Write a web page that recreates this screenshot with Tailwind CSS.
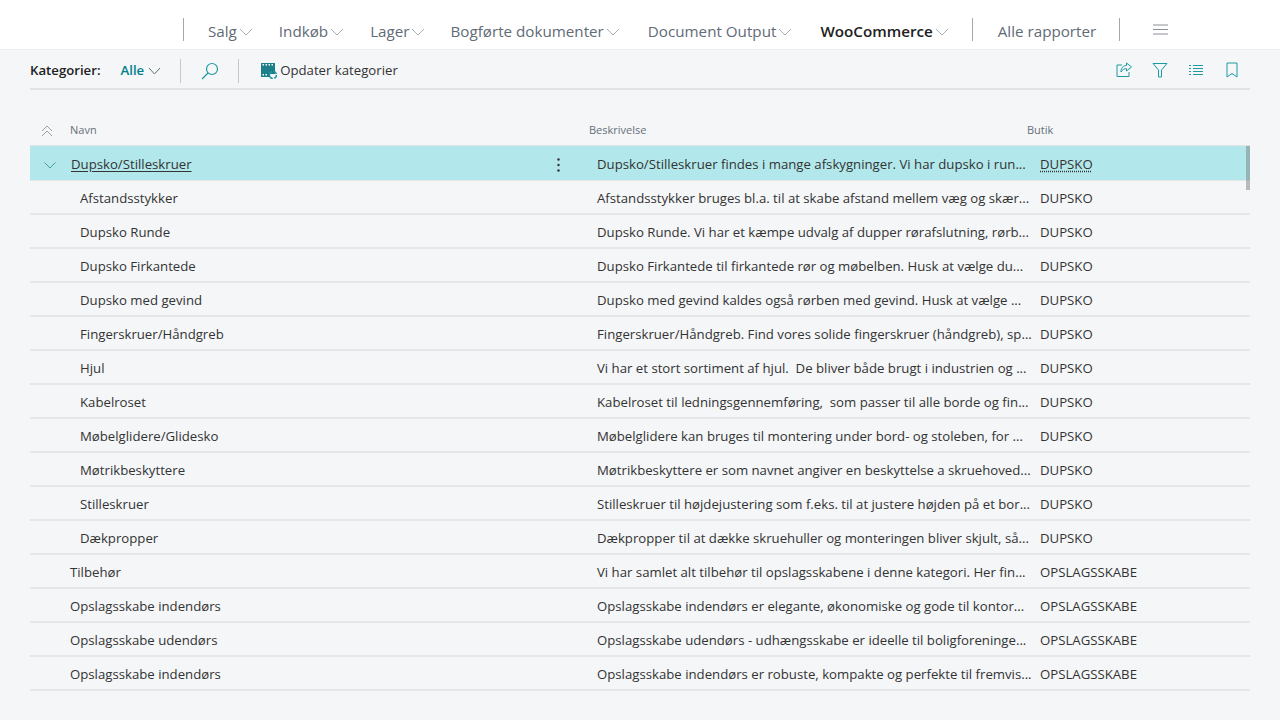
<!DOCTYPE html>
<html lang="da">
<head>
  <meta charset="UTF-8">
  <title>Kategorier</title>
  <script src="https://cdn.jsdelivr.net/npm/@tailwindcss/browser@4"></script>
</head>
<body class="bg-[#f5f6f8] h-[720px] overflow-hidden font-['Open_Sans',sans-serif] text-[13.2px] text-[#333]">
  <!-- top nav -->
  <nav class="h-[50px] bg-white flex items-center pl-[183px] pt-[10px] text-[15.2px] text-[#5f6b76] border-b border-[#eceef0]">
    <div class="w-px h-[23px] bg-[#a8a8a8]"></div>
    <div class="flex items-center pt-[3px] ml-[24px]">Salg<svg class="ml-[2px] mt-[2px] w-[14px] h-[8px]" viewBox="0 0 14 8" fill="none" stroke="#a9b0b5"><path d="M1 1l6 6 6-6"/></svg></div>
    <div class="flex items-center pt-[3px] ml-[26px]">Indkøb<svg class="ml-[2px] mt-[2px] w-[14px] h-[8px]" viewBox="0 0 14 8" fill="none" stroke="#a9b0b5"><path d="M1 1l6 6 6-6"/></svg></div>
    <div class="flex items-center pt-[3px] ml-[26px]">Lager<svg class="ml-[2px] mt-[2px] w-[14px] h-[8px]" viewBox="0 0 14 8" fill="none" stroke="#a9b0b5"><path d="M1 1l6 6 6-6"/></svg></div>
    <div class="flex items-center pt-[3px] ml-[25px]">Bogførte dokumenter<svg class="ml-[2px] mt-[2px] w-[14px] h-[8px]" viewBox="0 0 14 8" fill="none" stroke="#a9b0b5"><path d="M1 1l6 6 6-6"/></svg></div>
    <div class="flex items-center pt-[3px] ml-[28px]">Document Output<svg class="ml-[2px] mt-[2px] w-[14px] h-[8px]" viewBox="0 0 14 8" fill="none" stroke="#a9b0b5"><path d="M1 1l6 6 6-6"/></svg></div>
    <div class="flex items-center pt-[3px] ml-[28px] font-semibold text-[#212121]">WooCommerce<svg class="ml-[2px] mt-[2px] w-[14px] h-[8px]" viewBox="0 0 14 8" fill="none" stroke="#a9b0b5"><path d="M1 1l6 6 6-6"/></svg></div>
    <div class="w-px h-[23px] bg-[#a8a8a8] ml-[23px]"></div>
    <div class="pt-[3px] ml-[25px]">Alle rapporter</div>
    <div class="w-px h-[23px] bg-[#a8a8a8] ml-[23px]"></div>
    <svg class="ml-[32px] w-[17px] h-[11px]" viewBox="0 0 17 11" stroke="#8a9299" stroke-width="1.2"><path d="M1 1h15M1 5.5h15M1 10h15"/></svg>
  </nav>

  <!-- action bar -->
  <div class="mx-[30px] h-[40px] pt-[3px] flex items-center border-b-2 border-[#e1e3e5]">
    <span class="font-semibold text-[#212121]">Kategorier:</span>
    <span class="ml-[20px] font-semibold text-[#00808a]">Alle</span>
    <svg class="ml-[4px] w-[13px] h-[8px]" viewBox="0 0 13 8" fill="none" stroke="#5e7078"><path d="M1 1l5.500 6 5.500-6"/></svg>
    <div class="w-px h-[24px] bg-[#c8c8c8] ml-[19px]"></div>
    <svg class="ml-[20px] w-[18px] h-[18px]" viewBox="0 0 18 18" fill="none" stroke="#1f9aa3" stroke-width="1.200"><circle cx="11" cy="7" r="5.500"/><path d="M7 11l-6 6"/></svg>
    <div class="w-px h-[24px] bg-[#c8c8c8] ml-[19px]"></div>
    <svg class="ml-[22px] w-[16px] h-[16px]" viewBox="0 0 16 16"><path fill="#1a7f86" d="M0 0h14v11H9v3H0z"/><path fill="#fff" d="M1.500 1h1.500v1.500H1.500zM4.500 1H6v1.500H4.500zM7.500 1H9v1.500H7.500zM10.500 1H12v1.500h-1.500zM1.500 11H3v1.500H1.500zM4.500 11H6v1.500H4.500z"/><circle cx="12" cy="12" r="3.500" fill="none" stroke="#1f9aa3" stroke-width="1.500" stroke-dasharray="4 1.500"/></svg>
    <span class="ml-[3px]">Opdater kategorier</span>
    <div class="ml-auto flex items-center gap-[20px] pr-[10px] -mt-[2px]">
      <svg class="w-[16px] h-[16px]" viewBox="0 0 16 16" fill="none" stroke="#1f9aa3"><path d="M6 3H1v11.500h12V10"/><path d="M15.500 5L10.500 1v2.500C7 3.500 5 6 5 10c1.500-2.500 3-3.300 5.500-3.300V9z"/></svg>
      <svg class="w-[16px] h-[16px]" viewBox="0 0 16 16" fill="none" stroke="#1f9aa3"><path d="M1 1.500h14L9.500 8v7h-3V8z"/></svg>
      <svg class="w-[16px] h-[16px]" viewBox="0 0 16 16" fill="none" stroke="#1f9aa3"><path d="M1 3.500h2M5 3.500h10M1 6.500h2M5 6.500h10M1 9.500h2M5 9.500h10M1 12.500h2M5 12.500h10"/></svg>
      <svg class="w-[16px] h-[16px]" viewBox="0 0 16 16" fill="none" stroke="#1f9aa3"><path d="M3 1h10v14l-5-3.500L3 15z"/></svg>
    </div>
  </div>

  <!-- list -->
  <div class="mx-[30px] mt-[24px]">
    <div class="h-[32px] pt-[2px] flex items-center text-[11px] text-[#65707a] border-b border-[#e1e3e5]">
      <div class="w-[40px] pl-[11px]"><svg class="w-[12px] h-[12px]" viewBox="0 0 12 12" fill="none" stroke="#9aa0a5"><path d="M1 6l5-5 5 5M1 11l5-5 5 5"/></svg></div>
      <div class="w-[519px]">Navn</div>
      <div class="w-[438px]">Beskrivelse</div>
      <div>Butik</div>
    </div>
    <div class="relative">
      <div class="h-[35px] pt-[4px] flex items-center bg-[#b2e8eb] bg-clip-padding border-b border-[#e4e6e8] relative">
        <div class="w-[41px] pl-[14px]"><svg class="w-[12px] h-[7px]" viewBox="0 0 12 7" fill="none" stroke="#4d9aa2"><path d="M.5.500L6 6l5.500-5.500"/></svg></div>
        <div class="w-[526px] flex justify-between items-center pr-[37px]"><span class="underline underline-offset-2">Dupsko/Stilleskruer</span><svg class="w-[3px] h-[14px]" viewBox="0 0 3 14" fill="#333"><circle cx="1.500" cy="1.500" r="1.200"/><circle cx="1.500" cy="7" r="1.200"/><circle cx="1.500" cy="12.500" r="1.200"/></svg></div>
        <div class="w-[443px] whitespace-pre">Dupsko/Stilleskruer findes i mange afskygninger. Vi har dupsko i run...</div>
        <div class="underline decoration-dotted underline-offset-2">DUPSKO</div>
        <div class="absolute right-0 top-0 w-[4px] h-[44px] bg-[#7a8080]/50"></div>
      </div>
      <div class="h-[34px] pt-[4px] flex items-center border-b-2 border-[#e4e6e8]"><div class="w-[50px] shrink-0"></div><div class="w-[517px]">Afstandsstykker</div><div class="w-[443px] whitespace-pre">Afstandsstykker bruges bl.a. til at skabe afstand mellem væg og skær...</div><div>DUPSKO</div></div>
      <div class="h-[34px] pt-[4px] flex items-center border-b-2 border-[#e4e6e8]"><div class="w-[50px] shrink-0"></div><div class="w-[517px]">Dupsko Runde</div><div class="w-[443px] whitespace-pre">Dupsko Runde. Vi har et kæmpe udvalg af dupper rørafslutning, rørb...</div><div>DUPSKO</div></div>
      <div class="h-[34px] pt-[4px] flex items-center border-b-2 border-[#e4e6e8]"><div class="w-[50px] shrink-0"></div><div class="w-[517px]">Dupsko Firkantede</div><div class="w-[443px] whitespace-pre">Dupsko Firkantede til firkantede rør og møbelben. Husk at vælge du...</div><div>DUPSKO</div></div>
      <div class="h-[34px] pt-[4px] flex items-center border-b-2 border-[#e4e6e8]"><div class="w-[50px] shrink-0"></div><div class="w-[517px]">Dupsko med gevind</div><div class="w-[443px] whitespace-pre">Dupsko med gevind kaldes også rørben med gevind. Husk at vælge ...</div><div>DUPSKO</div></div>
      <div class="h-[34px] pt-[4px] flex items-center border-b-2 border-[#e4e6e8]"><div class="w-[50px] shrink-0"></div><div class="w-[517px]">Fingerskruer/Håndgreb</div><div class="w-[443px] whitespace-pre">Fingerskruer/Håndgreb. Find vores solide fingerskruer (håndgreb), sp...</div><div>DUPSKO</div></div>
      <div class="h-[34px] pt-[4px] flex items-center border-b-2 border-[#e4e6e8]"><div class="w-[50px] shrink-0"></div><div class="w-[517px]">Hjul</div><div class="w-[443px] whitespace-pre">Vi har et stort sortiment af hjul.  De bliver både brugt i industrien og ...</div><div>DUPSKO</div></div>
      <div class="h-[34px] pt-[4px] flex items-center border-b-2 border-[#e4e6e8]"><div class="w-[50px] shrink-0"></div><div class="w-[517px]">Kabelroset</div><div class="w-[443px] whitespace-pre">Kabelroset til ledningsgennemføring,  som passer til alle borde og fin...</div><div>DUPSKO</div></div>
      <div class="h-[34px] pt-[4px] flex items-center border-b-2 border-[#e4e6e8]"><div class="w-[50px] shrink-0"></div><div class="w-[517px]">Møbelglidere/Glidesko</div><div class="w-[443px] whitespace-pre">Møbelglidere kan bruges til montering under bord- og stoleben, for ...</div><div>DUPSKO</div></div>
      <div class="h-[34px] pt-[4px] flex items-center border-b-2 border-[#e4e6e8]"><div class="w-[50px] shrink-0"></div><div class="w-[517px]">Møtrikbeskyttere</div><div class="w-[443px] whitespace-pre">Møtrikbeskyttere er som navnet angiver en beskyttelse a skruehoved...</div><div>DUPSKO</div></div>
      <div class="h-[34px] pt-[4px] flex items-center border-b-2 border-[#e4e6e8]"><div class="w-[50px] shrink-0"></div><div class="w-[517px]">Stilleskruer</div><div class="w-[443px] whitespace-pre">Stilleskruer til højdejustering som f.eks. til at justere højden på et bor...</div><div>DUPSKO</div></div>
      <div class="h-[34px] pt-[4px] flex items-center border-b-2 border-[#e4e6e8]"><div class="w-[50px] shrink-0"></div><div class="w-[517px]">Dækpropper</div><div class="w-[443px] whitespace-pre">Dækpropper til at dække skruehuller og monteringen bliver skjult, så...</div><div>DUPSKO</div></div>
      <div class="h-[34px] pt-[4px] flex items-center border-b-2 border-[#e4e6e8]"><div class="w-[40px] shrink-0"></div><div class="w-[527px]">Tilbehør</div><div class="w-[443px] whitespace-pre">Vi har samlet alt tilbehør til opslagsskabene i denne kategori. Her fin...</div><div>OPSLAGSSKABE</div></div>
      <div class="h-[34px] pt-[4px] flex items-center border-b-2 border-[#e4e6e8]"><div class="w-[40px] shrink-0"></div><div class="w-[527px]">Opslagsskabe indendørs</div><div class="w-[443px] whitespace-pre">Opslagsskabe indendørs er elegante, økonomiske og gode til kontor...</div><div>OPSLAGSSKABE</div></div>
      <div class="h-[34px] pt-[4px] flex items-center border-b-2 border-[#e4e6e8]"><div class="w-[40px] shrink-0"></div><div class="w-[527px]">Opslagsskabe udendørs</div><div class="w-[443px] whitespace-pre">Opslagsskabe udendørs - udhængsskabe er ideelle til boligforeninge...</div><div>OPSLAGSSKABE</div></div>
      <div class="h-[34px] pt-[4px] flex items-center border-b-2 border-[#e4e6e8]"><div class="w-[40px] shrink-0"></div><div class="w-[527px]">Opslagsskabe indendørs</div><div class="w-[443px] whitespace-pre">Opslagsskabe indendørs er robuste, kompakte og perfekte til fremvis...</div><div>OPSLAGSSKABE</div></div>
    </div>
  </div>
</body>
</html>
